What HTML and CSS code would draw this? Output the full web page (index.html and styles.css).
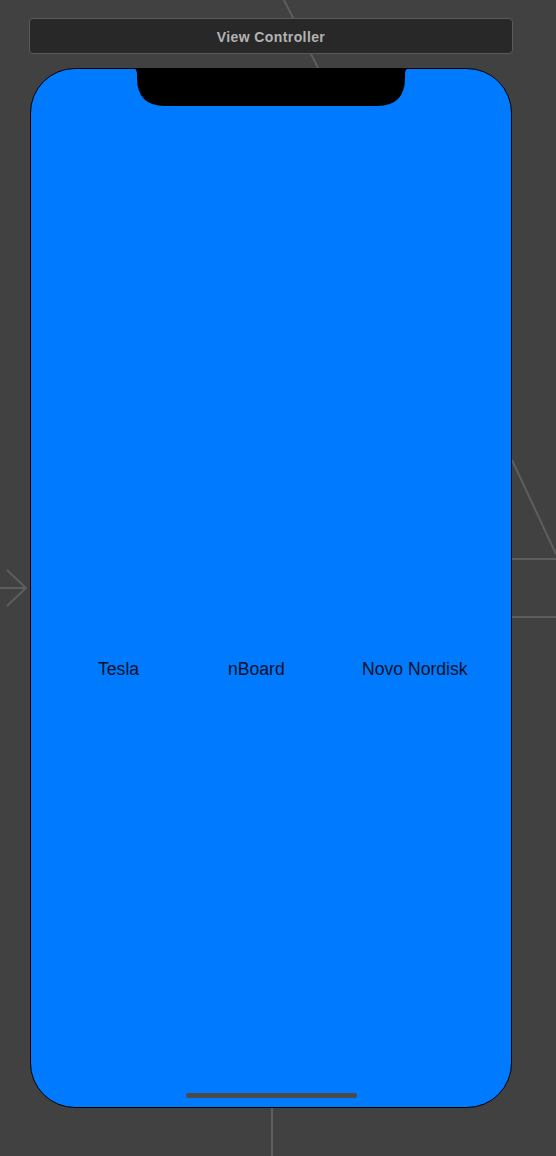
FILE: index.html
```html
<!DOCTYPE html>
<html>
<head>
<meta charset="utf-8">
<link rel="stylesheet" href="styles.css">
</head>
<body>
<div class="canvas">
  <svg class="segues" width="556" height="1156" viewBox="0 0 556 1156">
    <g stroke="#5e5e5e" stroke-width="2" fill="none">
      <line x1="284" y1="0" x2="319" y2="70"/>
      <line x1="512" y1="460" x2="556" y2="554"/>
      <line x1="512" y1="559" x2="556" y2="559"/>
      <line x1="512" y1="617" x2="556" y2="617"/>
      <line x1="0" y1="588" x2="26" y2="588"/>
      <polyline points="7,570 26,588 7,606"/>
      <line x1="272" y1="1108" x2="272" y2="1156"/>
    </g>
  </svg>
  <div class="scene">
    <div class="titlebar">View Controller</div>
    <div class="phone">
      <svg class="notch" width="278" height="39" viewBox="0 0 278 39">
        <path d="M0 0 Q5 0 5 6 V10 Q5 38 33 38 H245 Q273 38 273 10 V6 Q273 0 278 0 Z" fill="#000"/>
      </svg>
      <div class="stack">
        <span class="label">Tesla</span>
        <span class="label">nBoard</span>
        <span class="label">Novo Nordisk</span>
      </div>
      <div class="home"></div>
    </div>
  </div>
</div>
</body>
</html>
```

FILE: styles.css
```css
html, body {
  margin: 0;
  padding: 0;
  background: #414141;
}
.canvas {
  position: relative;
  width: 556px;
  height: 1156px;
  overflow: hidden;
  background: #414141;
}
.segues {
  position: absolute;
  left: 0;
  top: 0;
}
.scene {
  position: relative;
  padding-top: 18px;
  display: flex;
  flex-direction: column;
}
.titlebar {
  box-sizing: border-box;
  margin-left: 29px;
  width: 484px;
  height: 36px;
  padding-top: 2px;
  border: 1px solid #5a5a5a;
  border-radius: 4px;
  background: #282828;
  color: #b3b3b3;
  font-family: "Liberation Sans", Arial, sans-serif;
  font-weight: bold;
  font-size: 14px;
  letter-spacing: 0.4px;
  display: flex;
  align-items: center;
  justify-content: center;
}
.phone {
  position: relative;
  margin-top: 14px;
  margin-left: 30px;
  width: 480px;
  height: 1038px;
  border: 1px solid #000;
  border-radius: 45px;
  background: #007aff;
  display: flex;
  flex-direction: column;
}
.notch {
  position: absolute;
  left: 101px;
  top: -1px;
}
.stack {
  margin-top: 589px;
  padding-left: 67px;
  display: grid;
  grid-template-columns: 130px 134px auto;
  font-family: "Liberation Sans", Arial, sans-serif;
  font-size: 17.6px;
  line-height: 22px;
  color: #061226;
}
.home {
  margin-top: auto;
  margin-bottom: 9px;
  align-self: center;
  width: 171px;
  height: 5px;
  border-radius: 3px;
  background: #4b4b4b;
}
```
